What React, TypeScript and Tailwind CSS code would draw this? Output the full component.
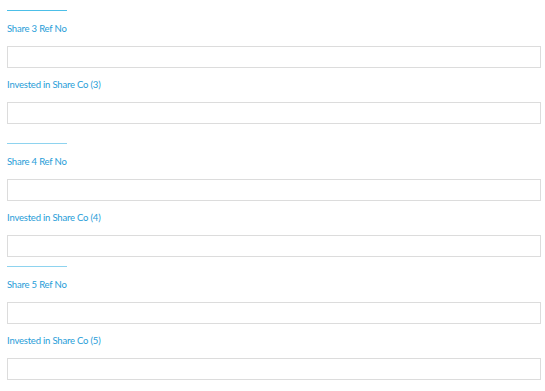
import React from "react";

const groups = [
  { n: 3, line: "bg-[#4cbfe8]", gapAfter: "mt-[19px]" },
  { n: 4, line: "bg-[#8ed3ef]", gapAfter: "mt-[9px]" },
  { n: 5, line: "bg-[#8ed3ef]", gapAfter: "" },
];

function Field({ label }: { label: string }) {
  return (
    <div className="flex flex-col">
      <label className="h-[16px] text-[9.5px] leading-[16px] tracking-[-0.2px] text-[#1f9dd8]">{label}</label>
      <input
        type="text"
        className="mt-[9px] h-[22px] w-full border border-[#dcdcdc] bg-white px-2 text-[12px] outline-none"
      />
    </div>
  );
}

export default function App() {
  return (
    <div
      className="min-h-screen bg-white pl-[7px] pr-[4px] pt-[10px]"
      style={{ fontFamily: 'Lato, "Open Sans", sans-serif' }}
    >
      {groups.map((g, i) => (
        <section key={g.n} className={i > 0 ? groups[i - 1].gapAfter : ""}>
          <div className={`h-px w-[60px] ${g.line}`} />
          <div className="mt-[10px] flex flex-col gap-[9px]">
            <Field label={`Share ${g.n} Ref No`} />
            <Field label={`Invested in Share Co (${g.n})`} />
          </div>
        </section>
      ))}
    </div>
  );
}
